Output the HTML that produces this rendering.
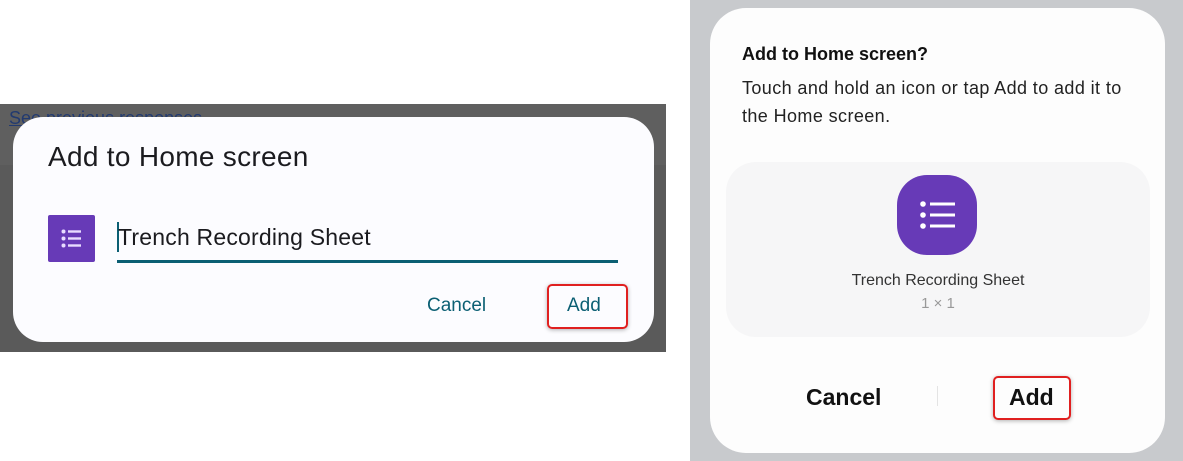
<!DOCTYPE html>
<html><head><style>
body{margin:0;width:1183px;height:461px;background:#fff;position:relative;overflow:hidden;font-family:"Liberation Sans",sans-serif}
.a{position:absolute}
</style></head><body>
<div class="a" style="left:0;top:104px;width:666px;height:248px;background:#5a5a5a"></div>
<div class="a" style="left:0;top:104px;width:666px;height:61px;background:#5f5f5f"></div>
<div class="a" style="left:9px;top:108px;font-size:18px;color:#223a70;text-decoration:underline">See previous responses</div>
<div class="a" style="left:13px;top:117px;width:641px;height:225px;background:#fcfcff;border-radius:30px"></div>
<div class="a" style="left:48px;top:141px;font-size:28px;letter-spacing:0.3px;color:#1b1b1f">Add to Home screen</div>
<div class="a" style="left:48px;top:215px;width:47px;height:47px;background:#673ab7;border-radius:2px">
<svg width="47" height="47" viewBox="0 0 47 47"><g fill="#e8dcff"><circle cx="15.5" cy="16.5" r="2"/><circle cx="15.5" cy="23.5" r="2"/><circle cx="15.5" cy="30.5" r="2"/><rect x="20" y="15.3" width="13" height="2.4"/><rect x="20" y="22.3" width="13" height="2.4"/><rect x="20" y="29.3" width="13" height="2.4"/></g></svg></div>
<div class="a" style="left:117px;top:222px;width:2px;height:30px;background:#0b5f73"></div>
<div class="a" style="left:118px;top:224px;font-size:23px;letter-spacing:0.2px;color:#1b1b1f">Trench Recording Sheet</div>
<div class="a" style="left:117px;top:260px;width:501px;height:3px;background:#0b5f73"></div>
<div class="a" style="left:427px;top:295px;font-size:19px;color:#0b5f73">Cancel</div>
<div class="a" style="left:547px;top:284px;width:77px;height:41px;border:2px solid #e02020;border-radius:5px;box-shadow:0 1px 4px rgba(0,0,0,.3)"></div>
<div class="a" style="left:567px;top:295px;font-size:19px;color:#0b5f73">Add</div>

<div class="a" style="left:690px;top:0;width:493px;height:461px;background:#c8cacd"></div>
<div class="a" style="left:710px;top:8px;width:455px;height:445px;background:#fdfdfd;border-radius:36px"></div>
<div class="a" style="left:742px;top:44px;font-size:18px;font-weight:bold;color:#111">Add to Home screen?</div>
<div class="a" style="left:742px;top:74px;font-size:18px;line-height:28px;letter-spacing:0.4px;color:#222;width:400px">Touch and hold an icon or tap Add to add it to the Home screen.</div>
<div class="a" style="left:726px;top:162px;width:424px;height:175px;background:#f6f6f7;border-radius:30px"></div>
<div class="a" style="left:897px;top:175px;width:80px;height:80px;background:#673ab7;border-radius:30px">
<svg width="80" height="80" viewBox="0 0 80 80"><g fill="#fff"><circle cx="26" cy="29" r="2.8"/><circle cx="26" cy="40" r="2.8"/><circle cx="26" cy="51" r="2.8"/><rect x="33" y="27.5" width="25" height="3"/><rect x="33" y="38.5" width="25" height="3"/><rect x="33" y="49.5" width="25" height="3"/></g></svg></div>
<div class="a" style="left:726px;width:424px;text-align:center;top:272px;font-size:16px;color:#333">Trench Recording Sheet</div>
<div class="a" style="left:726px;width:424px;text-align:center;top:295px;font-size:15px;color:#999">1 × 1</div>
<div class="a" style="left:937px;top:386px;width:1px;height:20px;background:#e4e4e4"></div>
<div class="a" style="left:806px;top:384px;font-size:23px;font-weight:bold;color:#111">Cancel</div>
<div class="a" style="left:993px;top:376px;width:74px;height:40px;border:2px solid #e02020;border-radius:5px;box-shadow:0 1px 4px rgba(0,0,0,.3)"></div>
<div class="a" style="left:1009px;top:384px;font-size:23px;font-weight:bold;color:#111">Add</div>
</body></html>
